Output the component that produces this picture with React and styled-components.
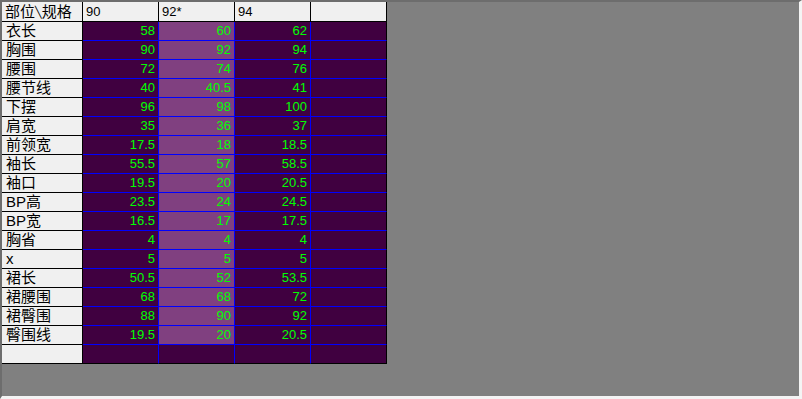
import styled, { createGlobalStyle } from 'styled-components';

const GlobalStyle = createGlobalStyle`
  html, body {
    margin: 0;
    padding: 0;
    background: #f0f0f0;
  }
`;

const Frame = styled.div`
  box-sizing: border-box;
  width: 802px;
  height: 399px;
  background: #808080;
  border-style: solid;
  border-width: 2px 3px 3px 2px;
  border-color: #6d6d6d #f4f4f4 #f4f4f4 #6d6d6d;
  overflow: hidden;
`;

const Sheet = styled.div`
  display: grid;
  grid-template-columns: 81px repeat(4, 76px);
  grid-template-rows: 20px;
  grid-auto-rows: 19px;
  width: max-content;
`;

const Cell = styled.div`
  box-sizing: border-box;
  overflow: hidden;
  white-space: nowrap;
  border-right: 1px solid ${p => (p.$edge ? '#000' : '#0000ff')};
  border-bottom: 1px solid ${p => (p.$last ? '#000' : '#0000ff')};
  background: ${p => (p.$current ? '#804080' : '#400040')};
  color: #00ff00;
  font-family: 'Liberation Sans', Arial, sans-serif;
  font-size: 13px;
  line-height: 18px;
  text-align: right;
  padding-right: 3px;
`;

const HeadCell = styled.div`
  box-sizing: border-box;
  overflow: hidden;
  white-space: nowrap;
  background: #f0f0f0;
  border-right: 1px solid #000;
  border-bottom: 1px solid #000;
  color: #000;
  font-family: 'Liberation Sans', Arial, sans-serif;
  font-size: 13px;
  line-height: 19px;
  padding-left: 3px;
`;

const Label = styled(HeadCell)`
  font-family: 'Liberation Sans', 'Noto Sans CJK SC', sans-serif;
  font-size: 15px;
  line-height: 18px;
  padding-left: 4px;
`;

const Corner = styled(Label)`
  line-height: 19px;
  padding-left: 3px;
`;

// diagonal box-drawing char stands in for the backslash
const Slash = styled.span`
  font-family: 'DejaVu Sans Mono', monospace;
  font-size: 11px;
  line-height: 11px;
  vertical-align: 1px;
`;

const sizes = ['90', '92*', '94', ''];

const rows = [
  ['衣长', '58', '60', '62'],
  ['胸围', '90', '92', '94'],
  ['腰围', '72', '74', '76'],
  ['腰节线', '40', '40.5', '41'],
  ['下摆', '96', '98', '100'],
  ['肩宽', '35', '36', '37'],
  ['前领宽', '17.5', '18', '18.5'],
  ['袖长', '55.5', '57', '58.5'],
  ['袖口', '19.5', '20', '20.5'],
  ['BP高', '23.5', '24', '24.5'],
  ['BP宽', '16.5', '17', '17.5'],
  ['胸省', '4', '4', '4'],
  ['x', '5', '5', '5'],
  ['裙长', '50.5', '52', '53.5'],
  ['裙腰围', '68', '68', '72'],
  ['裙臀围', '88', '90', '92'],
  ['臀围线', '19.5', '20', '20.5'],
  ['', '', '', ''],
];

const App = () => (
  <>
    <GlobalStyle />
    <Frame>
      <Sheet>
        <Corner>
          部位<Slash>╲</Slash>规格
        </Corner>
        {sizes.map((s, i) => (
          <HeadCell key={i}>{s}</HeadCell>
        ))}
        {rows.map(([name, ...vals], r) => {
          const last = r === rows.length - 1;
          return [
            <Label key={`l${r}`}>{name}</Label>,
            ...[...vals, ''].map((v, c) => (
              <Cell key={`${r}-${c}`} $current={c === 1 && !last} $edge={c === 3} $last={last}>
                {v}
              </Cell>
            )),
          ];
        })}
      </Sheet>
    </Frame>
  </>
);

export default App;
